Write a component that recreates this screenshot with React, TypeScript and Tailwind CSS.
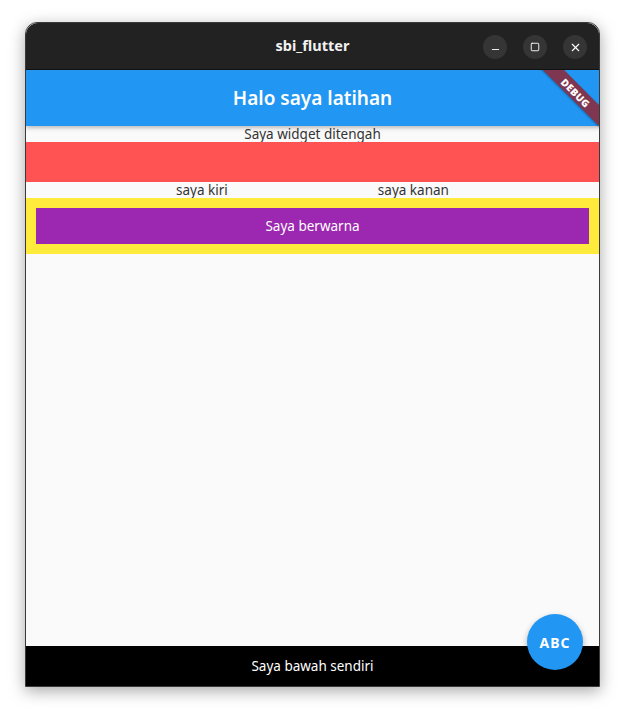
import { X, Minus, Square } from "lucide-react";

const font = { fontFamily: '"Noto Sans", "Liberation Sans", sans-serif' };

const TitleBar = () => {
  return (
    <div className="relative flex items-center justify-center h-[47px] bg-[#222222] border-b border-[#111] rounded-t-[12px]">
      <span className="text-[14.5px] font-bold text-[#f2f2f2]">sbi_flutter</span>
      <div className="absolute right-[12px] top-[12px] flex gap-[16px]">
        <div className="w-[24px] h-[24px] rounded-full bg-[#353535] flex items-end justify-center pb-[4px]">
          <Minus size={11} strokeWidth={2} className="text-white" />
        </div>
        <div className="w-[24px] h-[24px] rounded-full bg-[#353535] flex items-center justify-center">
          <Square size={10} strokeWidth={2.2} className="text-white" />
        </div>
        <div className="w-[24px] h-[24px] rounded-full bg-[#353535] flex items-center justify-center">
          <X size={13} strokeWidth={2} className="text-white" />
        </div>
      </div>
    </div>
  );
};

export default function App() {
  return (
    <div className="w-[625px] h-[715px] bg-white pt-[22px] pl-[25px]" style={font}>
      <div className="relative flex flex-col w-[575px] h-[665px] rounded-t-[12px] border border-[#3a3a3a] bg-[#fafafa] shadow-[0_4px_16px_rgba(0,0,0,0.35)]">
        <TitleBar />
        <div className="relative flex-1 flex flex-col overflow-hidden">
          <header className="h-[56px] bg-[#2196f3] flex items-center justify-center shadow-[0_2px_4px_rgba(0,0,0,0.25)] z-10">
            <h1 className="text-[19px] font-semibold text-white">Halo saya latihan</h1>
          </header>
          <main className="flex-1 flex flex-col text-[13.5px] text-[#333]">
            <p className="text-center leading-[16px]">Saya widget ditengah</p>
            <div className="h-[40px] bg-[#ff5252]"></div>
            <div className="flex justify-evenly leading-[16px]">
              <span>saya kiri</span>
              <span>saya kanan</span>
            </div>
            <div className="bg-[#ffeb3b] p-[10px]">
              <div className="h-[36px] bg-[#9c27b0] flex items-center justify-center text-white">
                Saya berwarna
              </div>
            </div>
          </main>
          <footer className="h-[40px] bg-black flex items-center justify-center text-[13.5px] text-white">
            Saya bawah sendiri
          </footer>
          <div className="absolute left-[490px] top-[15px] w-[120px] h-[15px] rotate-45 bg-[#7e3651] flex items-center justify-center z-20 shadow-[0_1px_2px_rgba(0,0,0,0.3)]">
            <span className="text-[10px] font-black text-white tracking-[0.3px] leading-none">DEBUG</span>
          </div>
        </div>
        <button className="absolute right-[16px] bottom-[16px] w-[56px] h-[56px] rounded-full bg-[#2196f3] text-white text-[14px] font-bold tracking-[1px] flex items-center justify-center shadow-[0_3px_6px_rgba(0,0,0,0.3)] z-30">
          ABC
        </button>
      </div>
    </div>
  );
}
